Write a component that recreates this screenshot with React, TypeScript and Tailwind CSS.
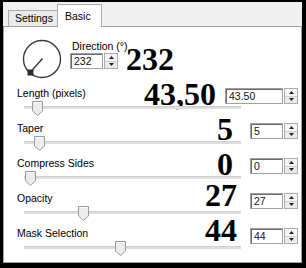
import React from 'react';

type SliderRow = {
  label: string;
  big: string;
  value: string;
  bigCls: string;
  boxCls: string;
  thumbCls: string;
};

const rows: SliderRow[] = [
  { label: 'Length (pixels)', big: '43,50', value: '43.50', bigCls: 'mt-[-5px] mr-[9px]', boxCls: 'w-[58px]', thumbCls: 'left-[8px]' },
  { label: 'Taper', big: '5', value: '5', bigCls: 'mt-[-5px] mr-[17px]', boxCls: 'w-[33px]', thumbCls: 'left-[10px]' },
  { label: 'Compress Sides', big: '0', value: '0', bigCls: 'mt-[-5px] mr-[17px]', boxCls: 'w-[33px]', thumbCls: 'left-[1px]' },
  { label: 'Opacity', big: '27', value: '27', bigCls: 'mt-[-9px] mr-[13px]', boxCls: 'w-[33px]', thumbCls: 'left-[54px]' },
  { label: 'Mask Selection', big: '44', value: '44', bigCls: 'mt-[-9px] mr-[13px]', boxCls: 'w-[33px]', thumbCls: 'left-[91px]' },
];

const sans = { fontFamily: '"Liberation Sans", Arial, sans-serif' };
const serif = { fontFamily: '"Liberation Serif", "Times New Roman", serif' };

const Spinner: React.FC = () => (
  <div className="w-[14px] h-[16px] flex flex-col border border-[#adadad] bg-[#f0f0f0]">
    <div className="flex-1 flex items-center justify-center border-b border-[#d0d0d0] bg-[#f5f5f5]">
      <svg width="5" height="3" viewBox="0 0 5 3"><path d="M2.5 0 L5 3 L0 3 Z" fill="#222" /></svg>
    </div>
    <div className="flex-1 flex items-center justify-center bg-[#ebebeb]">
      <svg width="5" height="3" viewBox="0 0 5 3"><path d="M0 0 L5 0 L2.5 3 Z" fill="#222" /></svg>
    </div>
  </div>
);

const NumBox: React.FC<{ value: string; cls: string }> = ({ value, cls }) => (
  <div className="flex gap-[1px]">
    <div className={`h-[16px] border border-[#a0a0a0] bg-white ${cls}`}>
      <div className="h-full border-t border-l border-[#6a6a6a] pl-[2px] text-[10.5px] leading-[13px] text-[#111]">
        {value}
      </div>
    </div>
    <Spinner />
  </div>
);

const Thumb: React.FC = () => (
  <svg width="11" height="15" viewBox="0 0 11 15">
    <path d="M0.5 0.5 H10.5 V10 L5.5 14.5 L0.5 10 Z" fill="#ececec" stroke="#9a9a9a" />
    <path d="M1.5 1.5 H9.5" stroke="#ffffff" />
  </svg>
);

export default function App() {
  return (
    <div className="w-[306px] h-[268px] bg-black pt-[2px] pl-[3px] pr-[4px] pb-[5px]" style={sans}>
      <div className="h-full flex flex-col bg-[#f0f0f0]">
        {/* tab strip */}
        <div className="h-[24px] flex items-end pl-[5px] text-[10.5px] text-black">
          <div className="w-[50px] h-[16px] border border-b-0 border-[#adadad] bg-[#ebebeb] pl-[6px] pt-[1px] leading-[12px]">
            Settings
          </div>
          <div className="relative z-10 ml-[-1px] mb-[-1px] w-[45px] h-[23px] border border-b-0 border-[#adadad] bg-white pl-[7px] pt-[5px] leading-[12px]">
            Basic
          </div>
        </div>

        {/* panel */}
        <div className="flex-1 bg-white border border-[#a0a0a0] text-black">
          {/* direction */}
          <div className="h-[60px] flex items-start pt-[12px]">
            <svg className="ml-[18px]" width="40" height="40" viewBox="0 0 40 40">
              <circle cx="20" cy="20" r="18.5" fill="none" stroke="#3a3a3a" strokeWidth="1.4" />
              <line x1="20.5" y1="19.5" x2="8.5" y2="33" stroke="#3a3a3a" strokeWidth="1.4" />
              <rect x="5.5" y="30.5" width="6" height="6" fill="#2a2a2a" />
            </svg>
            <div className="ml-[8px] mt-[1px] w-[48px] flex flex-col">
              <div className="pl-[2px] text-[10.5px] leading-[12px] whitespace-nowrap">Direction (°)</div>
              <div className="mt-[1px]">
                <NumBox value="232" cls="w-[33px]" />
              </div>
            </div>
            <div className="ml-[8px] mt-[4px] text-[32px] leading-[32px] font-bold" style={serif}>
              232
            </div>
          </div>

          {/* sliders */}
          {rows.map((r) => (
            <div key={r.label} className="h-[35px] flex flex-col">
              <div className="h-[19px] flex items-start pl-[13px]">
                <div className="flex-1 text-[10.5px] leading-[12px]">{r.label}</div>
                <div className={`text-[32px] leading-[24px] font-bold ${r.bigCls}`} style={serif}>
                  {r.big}
                </div>
                <div className="mt-[1px] mr-[3px]">
                  <NumBox value={r.value} cls={r.boxCls} />
                </div>
              </div>
              <div className="relative ml-[20px] w-[217px] h-[3px] bg-[#dedede] border-t border-[#cfcfcf]">
                <div className={`absolute top-[-6px] ${r.thumbCls}`}>
                  <Thumb />
                </div>
              </div>
            </div>
          ))}
        </div>
      </div>
    </div>
  );
}
